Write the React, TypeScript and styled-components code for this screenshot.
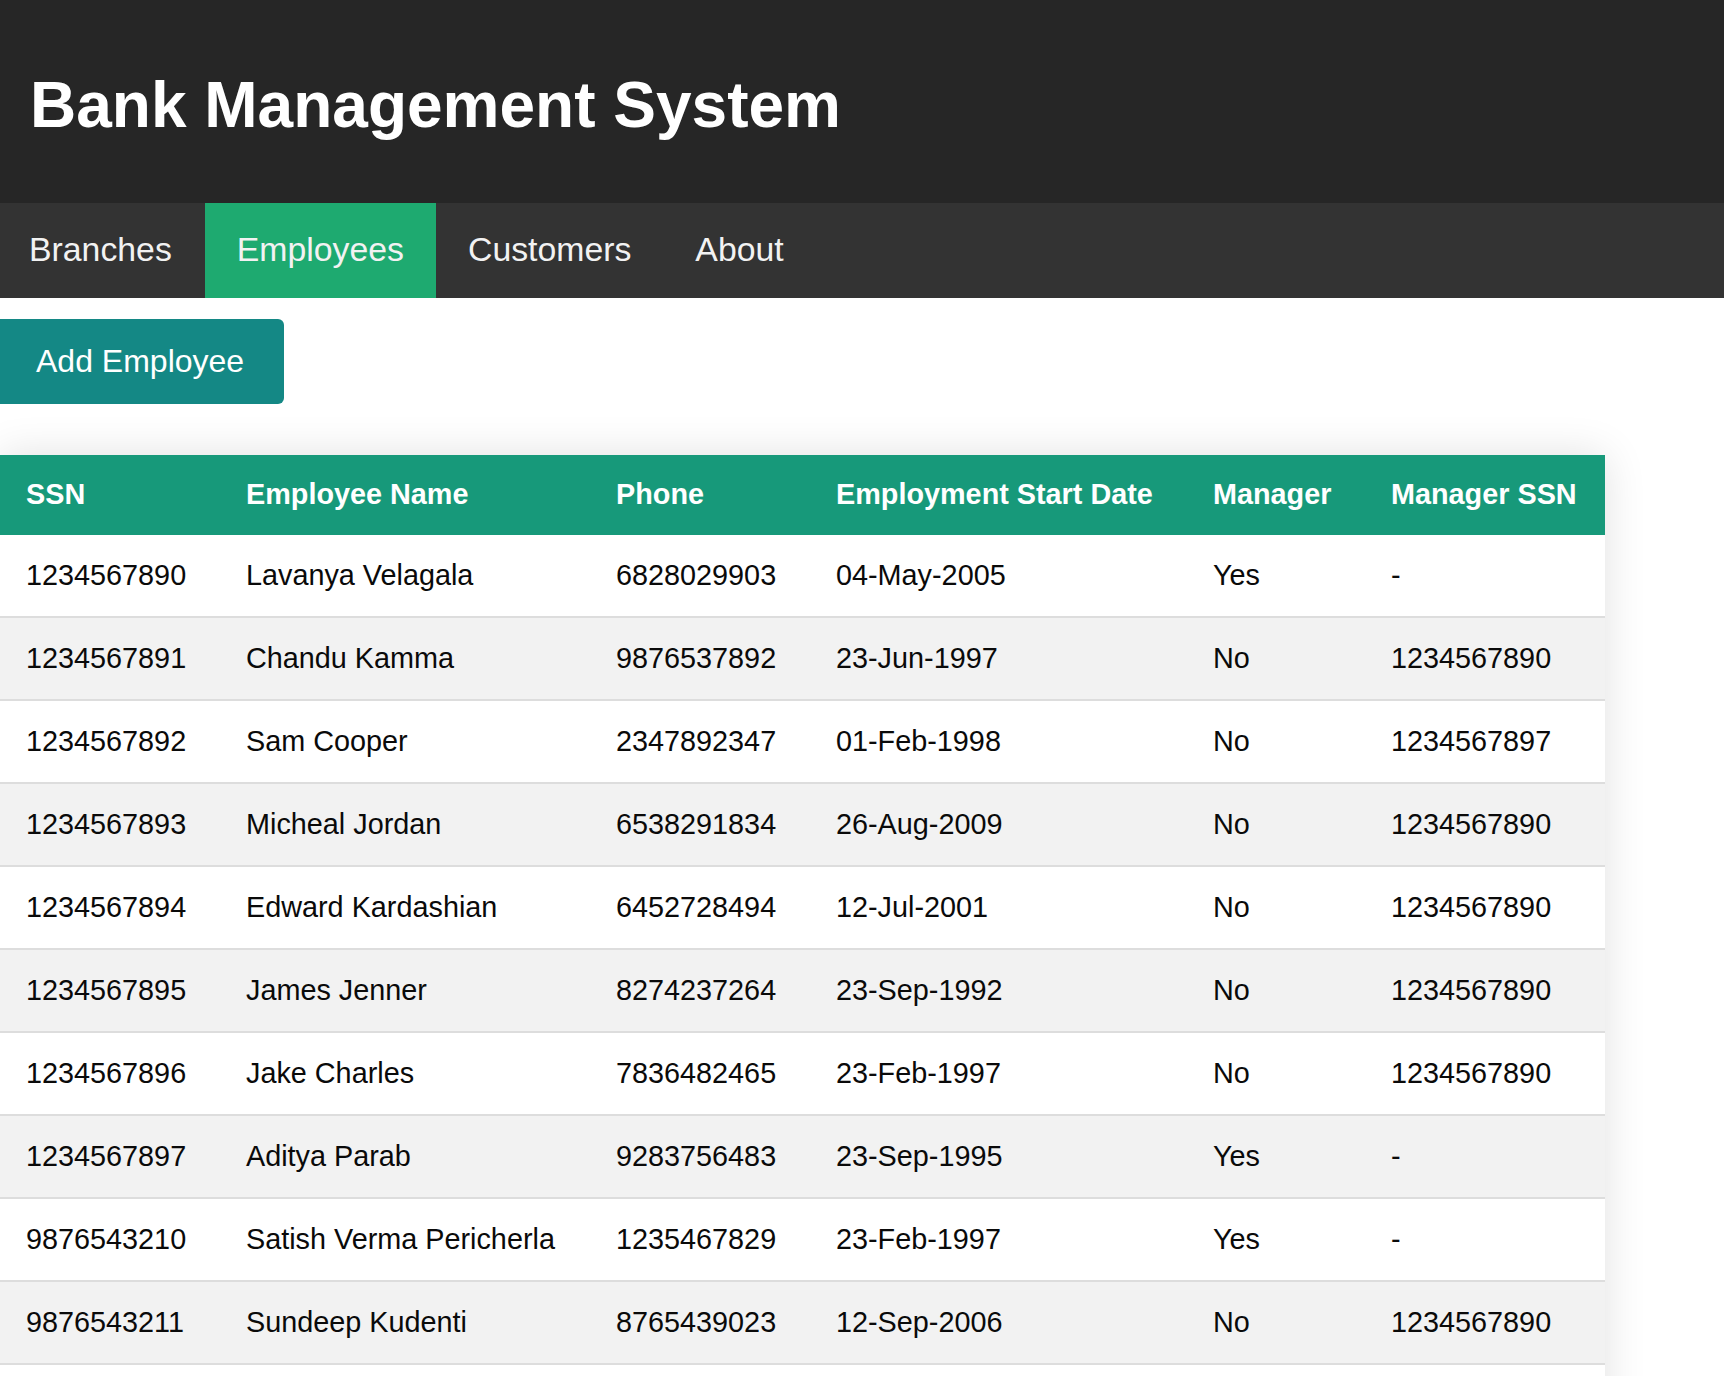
import React from "react";
import styled, { createGlobalStyle } from "styled-components";

const GlobalStyle = createGlobalStyle`
  html, body {
    margin: 0;
    padding: 0;
    background: #ffffff;
    font-family: "Liberation Sans", Arial, Helvetica, sans-serif;
  }
`;

const Page = styled.div`
  display: flex;
  flex-direction: column;
  align-items: flex-start;
`;

const Header = styled.header`
  align-self: stretch;
  height: 203px;
  background: #262626;
  display: flex;
  align-items: center;
  padding: 0 30px;
  box-sizing: border-box;
`;

const Title = styled.h1`
  margin: 0;
  color: #ffffff;
  font-size: 64px;
  font-weight: 700;
  line-height: 1;
  padding-top: 7px;
`;

const Nav = styled.nav`
  align-self: stretch;
  height: 95px;
  background: #333333;
  display: flex;
`;

const NavLink = styled.a<{ $active?: boolean }>`
  display: flex;
  align-items: center;
  padding: 0 32px 2px;
  color: #f2f2f2;
  font-size: 33.8px;
  text-decoration: none;
  background: ${(p) => (p.$active ? "#1eaa70" : "transparent")};
  cursor: pointer;

  &:first-child {
    padding-left: 29px;
    padding-right: 33px;
  }
`;

const AddButton = styled.button`
  margin-top: 21px;
  height: 85px;
  padding: 0 40px 0 36px;
  border: none;
  border-radius: 0 6px 6px 0;
  background: #148885;
  color: #ffffff;
  font-family: "Liberation Sans", Arial, Helvetica, sans-serif;
  font-size: 32px;
  cursor: pointer;
`;

const Table = styled.table`
  margin-top: 51px;
  width: 1605px;
  table-layout: fixed;
  border-collapse: collapse;
  box-shadow: 0 0 40px rgba(0, 0, 0, 0.12);
  font-size: 28.8px;
  line-height: 33px;
`;

const HeadCell = styled.th`
  background: #17997a;
  color: #ffffff;
  font-weight: 700;
  text-align: left;
  padding: 23px 0 24px 26px;
  white-space: nowrap;
`;

const Row = styled.tr`
  background: #ffffff;
  &:nth-child(even) {
    background: #f2f2f2;
  }
`;

const Cell = styled.td`
  color: #0a0a0a;
  padding: 24px 0 24px 26px;
  border-bottom: 2px solid #dddddd;
  white-space: nowrap;
`;

const columns = [
  { label: "SSN", width: 220 },
  { label: "Employee Name", width: 370 },
  { label: "Phone", width: 220 },
  { label: "Employment Start Date", width: 377 },
  { label: "Manager", width: 178 },
  { label: "Manager SSN", width: 240 },
];

const employees = [
  ["1234567890", "Lavanya Velagala", "6828029903", "04-May-2005", "Yes", "-"],
  ["1234567891", "Chandu Kamma", "9876537892", "23-Jun-1997", "No", "1234567890"],
  ["1234567892", "Sam Cooper", "2347892347", "01-Feb-1998", "No", "1234567897"],
  ["1234567893", "Micheal Jordan", "6538291834", "26-Aug-2009", "No", "1234567890"],
  ["1234567894", "Edward Kardashian", "6452728494", "12-Jul-2001", "No", "1234567890"],
  ["1234567895", "James Jenner", "8274237264", "23-Sep-1992", "No", "1234567890"],
  ["1234567896", "Jake Charles", "7836482465", "23-Feb-1997", "No", "1234567890"],
  ["1234567897", "Aditya Parab", "9283756483", "23-Sep-1995", "Yes", "-"],
  ["9876543210", "Satish Verma Pericherla", "1235467829", "23-Feb-1997", "Yes", "-"],
  ["9876543211", "Sundeep Kudenti", "8765439023", "12-Sep-2006", "No", "1234567890"],
  ["9876543212", "Ravi Teja", "9876501234", "15-Mar-2010", "No", "9876543210"],
];

export default function App() {
  return (
    <>
      <GlobalStyle />
      <Page>
        <Header>
          <Title>Bank Management System</Title>
        </Header>
        <Nav>
          <NavLink>Branches</NavLink>
          <NavLink $active>Employees</NavLink>
          <NavLink>Customers</NavLink>
          <NavLink>About</NavLink>
        </Nav>
        <AddButton>Add Employee</AddButton>
        <Table>
          <colgroup>
            {columns.map((c) => (
              <col key={c.label} style={{ width: c.width }} />
            ))}
          </colgroup>
          <thead>
            <tr>
              {columns.map((c) => (
                <HeadCell key={c.label}>{c.label}</HeadCell>
              ))}
            </tr>
          </thead>
          <tbody>
            {employees.map((e) => (
              <Row key={e[0]}>
                {e.map((v, i) => (
                  <Cell key={i}>{v}</Cell>
                ))}
              </Row>
            ))}
          </tbody>
        </Table>
      </Page>
    </>
  );
}
